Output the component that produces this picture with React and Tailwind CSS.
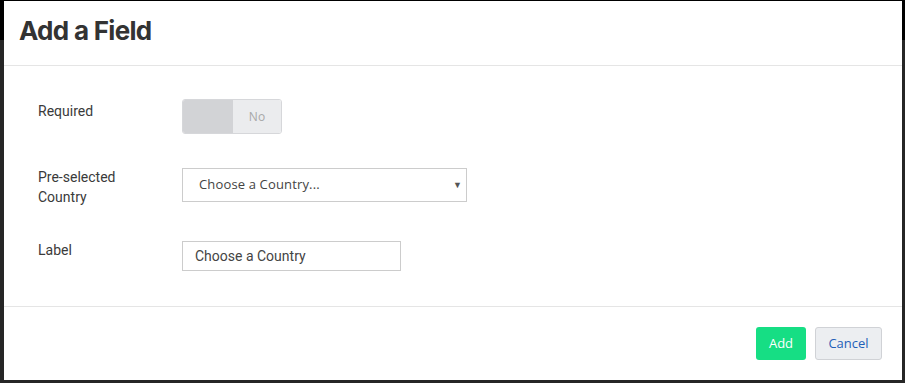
export default function App() {
  return (
    <div className="w-[905px] h-[383px] overflow-hidden bg-[linear-gradient(to_bottom,#000_40px,#262626_40px)] pt-[1px] pl-[4px]">
      <div className="w-[898px] h-[379px] bg-white flex flex-col">
        <div className="h-[65px] border-b border-[#e5e5e5] px-[15px] flex items-center">
          <h1 className="text-[26px] font-bold text-[#333] tracking-[-0.7px] leading-none mt-[-4px]" style={{ fontFamily: "Inter, 'Open Sans', sans-serif" }}>
            Add a Field
          </h1>
        </div>
        <div className="flex-1 px-[34px] pt-[33px] flex flex-col text-[14px] text-[#3a3a3a]" style={{ fontFamily: "Roboto, 'Open Sans', sans-serif" }}>
          <div className="flex items-start">
            <div className="w-[144px] leading-[20px] pt-[2px]">Required</div>
            <div className="w-[100px] h-[35px] rounded-[3px] border border-[#d6d7da] flex overflow-hidden">
              <div className="w-[50px] bg-[#d2d3d6]" />
              <div className="flex-1 bg-[#ebecee] flex items-center justify-center text-[12px] text-[#a8a8a8]" style={{ fontFamily: "'Open Sans', sans-serif" }}>No</div>
            </div>
          </div>
          <div className="flex items-start mt-[33px]">
            <div className="w-[144px] leading-[20px]">Pre-selected<br />Country</div>
            <div className="mt-[1px] w-[285px] h-[34px] border border-[#ccc] flex items-center justify-between pl-[16px] pr-[4px] text-[13px] text-[#444]" style={{ fontFamily: "'Open Sans', sans-serif" }}>
              <span className="tracking-[0.15px]">Choose a Country...</span>
              <span className="text-[9px] text-[#555]">▼</span>
            </div>
          </div>
          <div className="flex items-start mt-[33px]">
            <div className="w-[144px] leading-[20px]">Label</div>
            <div className="mt-[1px] w-[219px] h-[30px] border border-[#ccc] flex items-center pl-[12px] text-[14px] text-[#444]">Choose a Country</div>
          </div>
        </div>
        <div className="h-[74px] border-t border-[#e5e5e5] flex items-center justify-end gap-[9px] pr-[20px] text-[13px]" style={{ fontFamily: "'Open Sans', sans-serif" }}>
          <button className="w-[50px] h-[33px] rounded-[3px] bg-[#16de84] text-white">Add</button>
          <button className="w-[67px] h-[33px] rounded-[3px] bg-[#eceef1] border border-[#d0d2d6] text-[#1f5fb8]">Cancel</button>
        </div>
      </div>
    </div>
  );
}
